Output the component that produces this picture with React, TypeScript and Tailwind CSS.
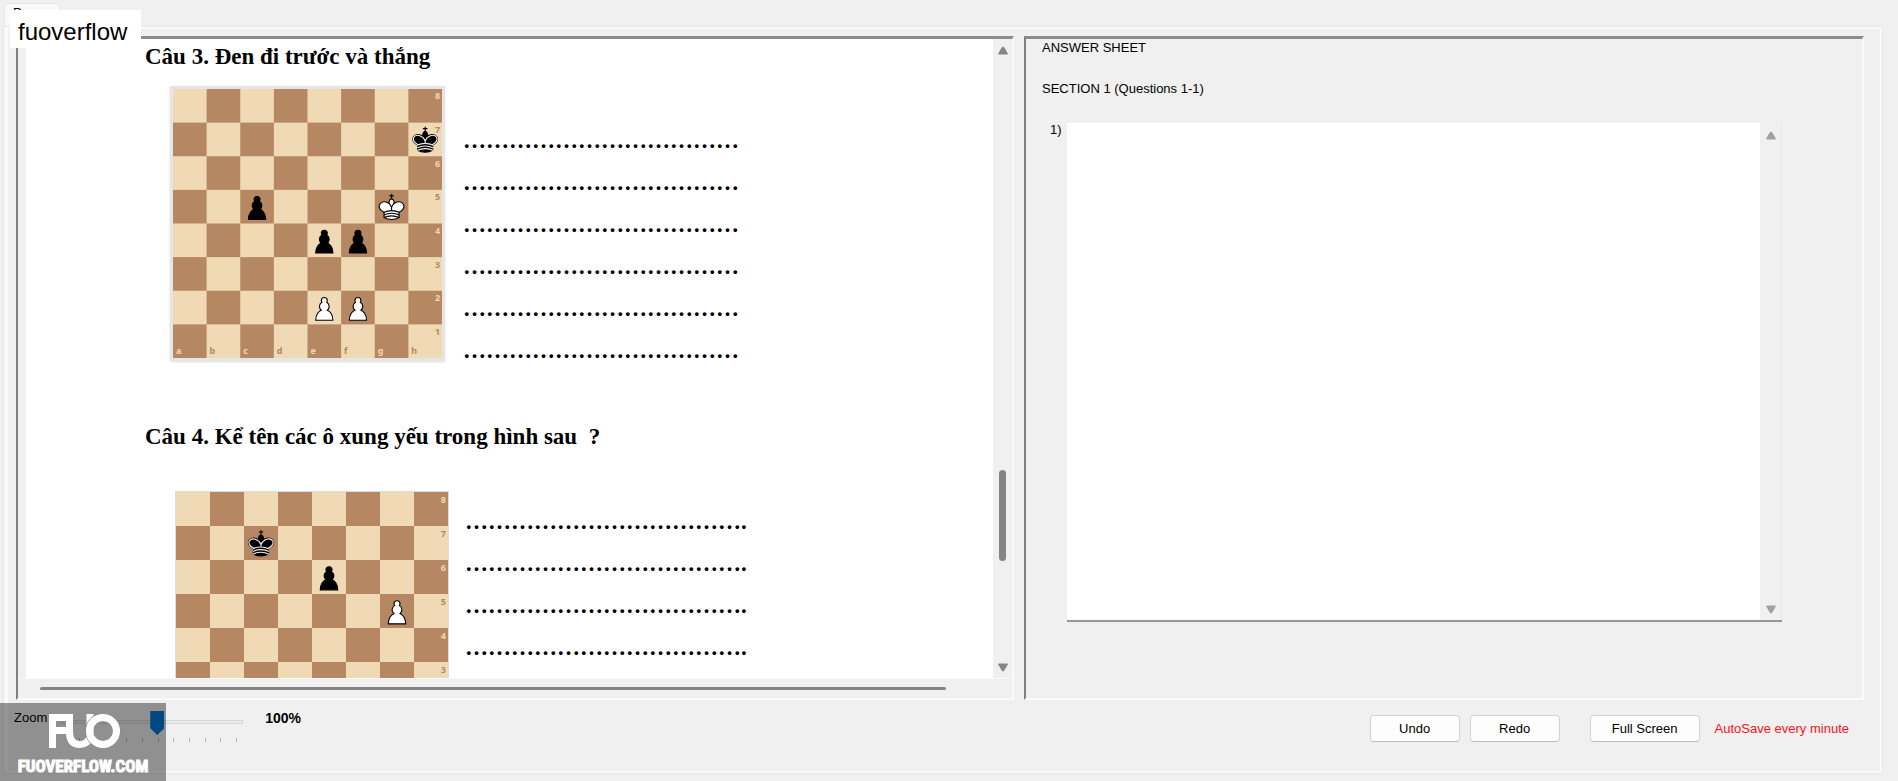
import type { ReactNode } from "react";

type Piece = { square: string; kind: "king" | "pawn"; color: "black" | "white" };

const FILES = ["a", "b", "c", "d", "e", "f", "g", "h"];
const RANKS = [8, 7, 6, 5, 4, 3, 2, 1];

const questionThree: Piece[] = [
  { square: "h7", kind: "king", color: "black" },
  { square: "g5", kind: "king", color: "white" },
  { square: "c5", kind: "pawn", color: "black" },
  { square: "e4", kind: "pawn", color: "black" },
  { square: "f4", kind: "pawn", color: "black" },
  { square: "e2", kind: "pawn", color: "white" },
  { square: "f2", kind: "pawn", color: "white" },
];

const questionFour: Piece[] = [
  { square: "c7", kind: "king", color: "black" },
  { square: "e6", kind: "pawn", color: "black" },
  { square: "g5", kind: "pawn", color: "white" },
];

function Pawn({ color }: { color: Piece["color"] }) {
  return (
    <path
      d="M22.5 9c-2.21 0-4 1.79-4 4 0 .89.29 1.71.78 2.38C17.33 16.5 16 18.59 16 21c0 2.03.94 3.84 2.41 5.03-3 1.06-7.41 5.55-7.41 13.47h23c0-7.92-4.41-12.41-7.41-13.47 1.47-1.19 2.41-3 2.41-5.03 0-2.41-1.33-4.5-3.28-5.62.49-.67.78-1.49.78-2.38 0-2.21-1.79-4-4-4z"
      fill={color === "black" ? "#000" : "#fff"}
      stroke="#000"
      strokeWidth="1.5"
      strokeLinecap="round"
    />
  );
}

function King({ color }: { color: Piece["color"] }) {
  const fill = color === "black" ? "#000" : "#fff";
  const detail = color === "black" ? "#ececec" : "#000";
  return (
    <g fill="none" stroke="#000" strokeWidth="1.5" strokeLinecap="round" strokeLinejoin="round">
      <path d="M22.5 11.63V6M20 8h5" />
      <path d="M22.5 25s4.5-7.5 3-10.5c0 0-1-2.5-3-2.5s-3 2.5-3 2.5c-1.5 3 3 10.5 3 10.5" fill={fill} />
      <path d="M12.5 37c5.5 3.5 14.5 3.5 20 0v-7s9-4.5 6-10.5c-4-6.5-13.5-3.5-16 4V27v-3.5c-2.5-7.5-12-10.5-16-4-3 6 6 10.5 6 10.5v7" fill={fill} />
      {color === "black" && (
        <path d="M32 29.5s8.5-4 6.03-9.65C34.15 14 25 18 22.5 24.5v2.1-2.1C20 18 10.85 14 6.97 19.85 4.5 25.5 13 29.5 13 29.5" stroke={detail} />
      )}
      <path d="M12.5 30c5.5-3 14.5-3 20 0m-20 3.5c5.5-3 14.5-3 20 0m-20 3.5c5.5-3 14.5-3 20 0" stroke={detail} />
    </g>
  );
}

function Board({ pieces, className }: { pieces: Piece[]; className: string }) {
  return (
    <svg viewBox="0 0 360 360" className={className} role="img" aria-label="Chess board">
      <rect width="360" height="360" fill="#f0d9b5" />
      {RANKS.map((rank, row) =>
        FILES.map((file, col) =>
          (row + col) % 2 === 1 ? (
            <rect key={file + rank} x={col * 45} y={row * 45} width="45" height="45" fill="#b58863" />
          ) : null
        )
      )}
      {RANKS.map((rank, row) => (
        <text key={rank} x="354" y={row * 45 + 14} textAnchor="middle" fontSize="12" fontWeight="700" fontFamily="Noto Sans, sans-serif" fill={row % 2 === 0 ? "#f0d9b5" : "#b58863"}>
          {rank}
        </text>
      ))}
      {FILES.map((file, col) => (
        <text key={file} x={col * 45 + 4} y="355" fontSize="12" fontWeight="700" fontFamily="Noto Sans, sans-serif" fill={col % 2 === 0 ? "#f0d9b5" : "#b58863"}>
          {file}
        </text>
      ))}
      {pieces.map(({ square, kind, color }) => (
        <g key={square} transform={`translate(${FILES.indexOf(square[0]) * 45} ${(8 - Number(square[1])) * 45})`}>
          {kind === "king" ? <King color={color} /> : <Pawn color={color} />}
        </g>
      ))}
    </svg>
  );
}

function Arrow({ down = false, className }: { down?: boolean; className: string }) {
  return (
    <svg viewBox="0 0 12 9" className={className} aria-hidden="true">
      <path d={down ? "M1.5 1h9L6.8 7.6q-.8 1-1.6 0z" : "M1.5 8h9L6.8 1.4q-.8-1-1.6 0z"} fill="currentColor" stroke="currentColor" strokeLinejoin="round" />
    </svg>
  );
}

function AnswerLines({ count, tail = "", className }: { count: number; tail?: string; className: string }) {
  return (
    <div className={className}>
      {Array.from({ length: count }, (_, i) => (
        <p key={i} className="leading-[42px] whitespace-nowrap">
          {"…".repeat(12)}
          {tail}
        </p>
      ))}
    </div>
  );
}

function FormButton({ children, className = "" }: { children: ReactNode; className?: string }) {
  return (
    <button type="button" className={`h-[27px] rounded border border-[#d2d2d2] border-b-[#bcbcbc] bg-[#fdfdfd] ${className}`}>
      {children}
    </button>
  );
}

export default function App() {
  return (
    <div className="relative flex h-screen flex-col overflow-hidden bg-[#f0f0f0] pb-2 pl-1 pr-4 font-['Liberation_Sans',sans-serif] text-[13px] leading-5 text-black">
      {/* tab strip */}
      <div className="flex h-[27px] shrink-0 items-end">
        <div className="h-6 w-14 overflow-hidden border border-b-0 border-[#e5e5e5] bg-[#f9f9f9] pl-2 leading-[18px]">Paper</div>
      </div>

      <main className="flex min-h-0 flex-1 flex-col border-2 border-[#f9f9f9] border-l-4 pl-2 pr-4 pt-[7px] outline outline-[#e7e7e7]">
        <div className="flex min-h-0 flex-1 gap-[10px]">
          {/* paper */}
          <section className="flex w-[998px] shrink-0 flex-col border-2 border-t-3 border-[#7f7f7f] border-t-[#8c8c8c] border-b-[#fafafa] border-r-[#fafafa]">
            <div className="flex min-h-0 flex-1">
              <div className="w-2 shrink-0" />
              <article className="min-w-0 flex-1 overflow-hidden bg-white pl-[119px] font-['Liberation_Serif',serif] text-[23px] font-bold">
                <h2 className="pt-[2px] leading-8">Câu 3. Đen đi trước và thắng</h2>
                <div className="mt-[13px] ml-[25px] flex items-start gap-[18px]">
                  <div className="border-3 border-[#e7e5e3] shadow-sm">
                    <Board pieces={questionThree} className="block size-[269px]" />
                  </div>
                  <AnswerLines count={6} className="pt-[34px]" />
                </div>
                <h2 className="mt-[49px] whitespace-pre leading-8">Câu 4. Kể tên các ô xung yếu trong hình sau  ?</h2>
                <div className="mt-[38px] ml-[30px] flex items-start gap-4">
                  <div className="border border-[#dcdcdc]">
                    <Board pieces={questionFour} className="block size-[272px]" />
                  </div>
                  <AnswerLines count={4} tail="." className="pt-[10px]" />
                </div>
              </article>
              <div className="flex w-[19px] shrink-0 flex-col items-center text-[#858585]">
                <Arrow className="mt-[7px] h-[9px] w-3" />
                <div className="mt-[415px] h-[91px] w-[7px] rounded-full bg-[#858585]" />
                <Arrow down className="mt-auto mb-[6px] h-[9px] w-3" />
              </div>
            </div>
            <div className="h-5 shrink-0 border-t border-[#fafafa] pl-[22px] pr-[66px] pt-[8px]">
              <div className="h-[3px] rounded-full bg-[#858585]" />
            </div>
          </section>

          {/* answer sheet */}
          <section className="min-w-0 flex-1 border-2 border-t-3 border-[#7f7f7f] border-t-[#8c8c8c] border-b-[#fafafa] border-r-[#fafafa] pl-4">
            <h1 className="leading-[18px]">ANSWER SHEET</h1>
            <h2 className="mt-[22px]">SECTION 1 (Questions 1-1)</h2>
            <div className="mt-6 mr-20 flex gap-[5px] pl-2">
              <label htmlFor="answer" className="leading-[14px]">1)</label>
              <div className="flex h-[499px] min-w-0 flex-1 border-b-2 border-[#959595]">
                <textarea id="answer" className="min-w-0 flex-1 resize-none bg-white p-1 outline-none" />
                <div className="flex w-[22px] shrink-0 flex-col items-center justify-between border-r border-[#e5e5e5] pt-[8px] pb-[6px] text-[#a0a0a0]">
                  <Arrow className="h-[9px] w-3" />
                  <Arrow down className="h-[9px] w-3" />
                </div>
              </div>
            </div>
          </section>
        </div>

        {/* footer controls */}
        <footer className="-ml-0.5 flex h-[71px] shrink-0 items-start">
          <label htmlFor="zoom" className="pt-2">Zoom</label>
          <div className="relative ml-[14px] mt-[11px] h-8 w-[182px]">
            <div className="mt-[9px] h-1 border border-[#d5d9d9] bg-[#e7eaea]" />
            <div className="mt-[14px] ml-[18px] flex w-[158px] justify-between">
              {Array.from({ length: 11 }, (_, i) => (
                <span key={i} className="h-1 w-px bg-[#b8b8b8]" />
              ))}
            </div>
            <input
              id="zoom"
              type="range"
              min="0"
              max="10"
              defaultValue="5"
              className="absolute left-[10px] top-0 h-6 w-[172px] appearance-none bg-transparent [&::-webkit-slider-thumb]:h-6 [&::-webkit-slider-thumb]:w-[14px] [&::-webkit-slider-thumb]:appearance-none [&::-webkit-slider-thumb]:bg-[#0078d7] [&::-webkit-slider-thumb]:[clip-path:polygon(0_0,100%_0,100%_72%,50%_100%,0_72%)]"
            />
          </div>
          <output htmlFor="zoom" className="ml-[22px] pt-2 text-sm leading-5 font-bold">100%</output>
          <div className="ml-auto flex items-center pt-[15px]">
            <FormButton className="w-[90px]">Undo</FormButton>
            <FormButton className="ml-[10px] w-[90px]">Redo</FormButton>
            <FormButton className="ml-[30px] w-[110px]">Full Screen</FormButton>
            <p className="mx-[15px] text-[#ff1020]">AutoSave every minute</p>
          </div>
        </footer>
      </main>

      {/* site marks over the window */}
      <div className="absolute left-[10px] top-[10px] bg-white pt-[7px] pb-px pl-2 pr-[14px] text-2xl leading-[30px]">fuoverflow</div>
      <div className="absolute bottom-0 left-0 flex h-[78px] w-[166px] flex-col items-center bg-black/40 pt-[11px] text-white">
        <svg viewBox="0 0 76 34" className="ml-1 h-[34px] w-[76px]" fill="none" stroke="currentColor" strokeWidth="7" aria-hidden="true">
          <path d="M5.5 34V3.5H26M5.5 16.5H19" />
          <path d="M22.5 3V18Q22.5 30.5 33 30.5Q41 30.5 43 22V0" />
          <circle cx="56" cy="17" r="17.5" stroke="#8e8e8e" strokeWidth="1" />
          <circle cx="56" cy="17" r="13.5" />
        </svg>
        <span className="mt-[6px] font-['Liberation_Sans_Narrow','Roboto_Condensed','Open_Sans_Condensed',sans-serif] text-[17px] leading-6 font-bold [-webkit-text-stroke:1px_white]">FUOVERFLOW.COM</span>
      </div>
    </div>
  );
}
